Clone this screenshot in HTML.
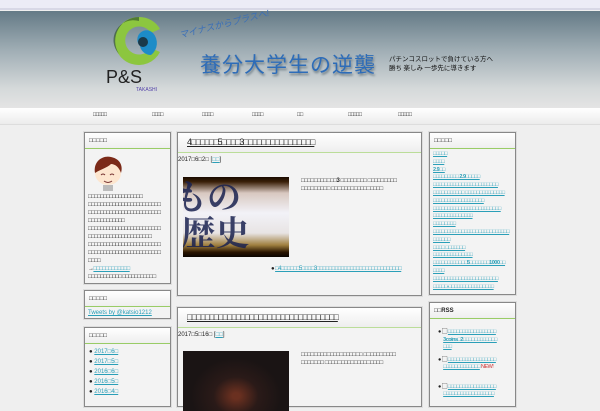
<!DOCTYPE html>
<html><head><meta charset="utf-8"><style>
*{margin:0;padding:0;box-sizing:border-box}
body{width:600px;height:400px;overflow:hidden;background:#efefef;font-family:"Liberation Sans","Noto Sans CJK JP",sans-serif;font-size:7px;color:#333;position:relative}
.abs{position:absolute}
#top{left:0;top:0;width:600px;height:10px;background:#ececf6;border-bottom:2px solid #d8d8e6}
#hdr{left:0;top:11px;width:600px;height:97px;background:linear-gradient(#647a86,#9fadb4 40%,#d5d9da 80%,#e4e4e4)}
#nav{left:0;top:108px;width:600px;height:17px;background:linear-gradient(#fff,#ececec);border-bottom:1px solid #ddd}
.ni{position:absolute;top:112px;font-size:6px;color:#222;letter-spacing:-1px;font-weight:bold}
.box{position:absolute;background:#f3f3f3;border:1px solid #888;box-shadow:0 0 0 1px #ddd}
.bh{height:16px;background:linear-gradient(#fff,#eee);border-bottom:1px solid #9c6;font-size:6px;padding:5px 4px;color:#222;font-weight:bold}
.t{font-size:6px;line-height:8px;color:#222;font-weight:bold}
a,.lk{color:#2a9fb8;text-decoration:underline}
</style></head><body>
<div id="top" class="abs"></div>
<div id="hdr" class="abs"></div>
<svg class="abs" style="left:112px;top:14px" width="56" height="54" viewBox="0 0 56 54">
<path d="M27 3a24 24 0 1 0 21 35l-9-4a14 14 0 1 1 0-15l9-4A24 24 0 0 0 27 3z" fill="#8cc63f"/>
<path d="M27 3a24 24 0 0 0-20 37a20 20 0 0 1 20-33z" fill="#2a4a2a" opacity=".6"/>
<path d="M41 19a15 15 0 0 1-2 22a11 11 0 0 1-11-9a9 9 0 0 1 13-13z" fill="#1d8cc8"/>
<circle cx="31" cy="28" r="5" fill="#1a3a4a"/>
</svg>
<div class="abs" style="left:106px;top:67px;font-size:18px;color:#222">P&amp;S</div>
<div class="abs" style="left:136px;top:87px;font-size:5px;color:#54a">TAKASHI</div>
<div class="abs" style="left:181px;top:28px;font-size:9px;color:#3a6fb8;transform:rotate(-14deg);transform-origin:left bottom;font-style:italic">マイナスからプラスへ!</div>
<div class="abs" style="left:200px;top:49px;font-size:21px;letter-spacing:1px;color:#2d6cb8;text-shadow:1px 2px 2px #6a7a84;font-family:'Noto Sans CJK JP',sans-serif">養分大学生の逆襲</div>
<div class="abs" style="left:389px;top:54px;font-size:6.5px;line-height:9px;color:#111;font-family:'Noto Sans CJK JP',sans-serif">パチンコスロットで負けている方へ<br>勝ち 楽しみ 一歩先に導きます</div>
<div id="nav" class="abs"></div>
<div class="ni" style="left:93px">□□□□□</div>
<div class="ni" style="left:152px">□□□□</div>
<div class="ni" style="left:202px">□□□□</div>
<div class="ni" style="left:252px">□□□□</div>
<div class="ni" style="left:297px">□□</div>
<div class="ni" style="left:348px">□□□□□</div>
<div class="ni" style="left:398px">□□□□□</div>

<div class="box" style="left:84px;top:132px;width:87px;height:152px">
<div class="bh">□□□□□</div>
<svg style="margin:4px 0 0 4px" width="38" height="38" viewBox="0 0 38 38"><ellipse cx="19" cy="20" rx="13" ry="12" fill="#fde6cf"/><path d="M6 20c-2-12 8-18 16-16c10 2 12 10 10 16c-2-6-6-9-10-9c-4 4-10 5-16 9z" fill="#7b2a18"/><path d="M12 22q2-2 4 0M21 22q2-2 4 0M15 28q4 3 8 0" stroke="#733" fill="none"/><rect x="14" y="32" width="10" height="6" fill="#bbb"/></svg>
<div class="t" style="padding:0 3px;letter-spacing:-0.6px">□□□□□□□□□□□□□□□□□□<br>□□□□□□□□□□□□□□□□□□□□□□□□<br>□□□□□□□□□□□□□□□□□□□□□□□□<br>□□□□□□□□□□□□<br>□□□□□□□□□□□□□□□□□□□□□□□□<br>□□□□□□□□□□□□□□□□□□□□□<br>□□□□□□□□□□□□□□□□□□□□□□□□<br>□□□□□□□□□□□□□□□□□□□□□□□□<br>□□□□<br>→<span class="lk">□□□□□□□□□□□□</span><br>□□□□□□□□□□□ □□□□□□□□□□□</div>
</div>
<div class="box" style="left:84px;top:290px;width:87px;height:29px">
<div class="bh">□□□□□</div>
<div class="t" style="padding:2px 3px;font-weight:normal"><a>Tweets by @katsio1212</a></div>
</div>
<div class="box" style="left:84px;top:327px;width:87px;height:80px">
<div class="bh">□□□□□</div>
<div class="t" style="padding:3px 4px;line-height:10px;font-weight:normal">● <a>2017□6□</a><br>● <a>2017□5□</a><br>● <a>2016□6□</a><br>● <a>2016□5□</a><br>● <a>2016□4□</a></div>
</div>

<div class="box" style="left:177px;top:132px;width:245px;height:164px">
<div style="height:20px;background:linear-gradient(#fff,#eee);border-bottom:1px solid #bd9;padding:4px 0 0 9px;font-size:9px;color:#222;text-decoration:underline;letter-spacing:-1px">4□□□□□□5□□□□3□□□□□□□□□□□□□□□□</div>
<div class="t" style="padding:3px 0 0 0;font-weight:normal">2017□6□2□ [<span class="lk">□□</span>]</div>
<div style="position:absolute;left:5px;top:44px;width:106px;height:80px;overflow:hidden;background:linear-gradient(#1a0a00 0,#3a2008 6%,#d8c8c0 20%,#f2f2f8 45%,#e8e4e4 70%,#a08040 85%,#2a1400 94%,#0a0400)"><div style="font-size:34px;color:#1a2250;font-family:'Noto Serif CJK SC',serif;line-height:36px;padding-left:0;font-weight:bold;opacity:.85;margin-left:-10px">もの<br>&nbsp;歴史</div></div>
<div class="t" style="position:absolute;left:123px;top:44px;width:120px;letter-spacing:-0.4px">□□□□□□□□□□□3 □□□□□□□□ □□□□□□□□□<br>□□□□□□□□□ □□□□□□□□□□□□□□□□</div>
<div class="t" style="position:absolute;left:93px;top:132px;letter-spacing:-0.6px;font-weight:normal">● <span class="lk">□4□□□□□□5□□□□3□□□□□□□□□□□□□□□□□□□□□□□□□□□□</span></div>
</div>
<div class="box" style="left:177px;top:307px;width:245px;height:100px">
<div style="height:20px;background:linear-gradient(#fff,#eee);border-bottom:1px solid #bd9;padding:4px 0 0 9px;font-size:9px;color:#222;text-decoration:underline;letter-spacing:-1px">□□□□□□□□□□□□□□□□□□□□□□□□□□□□□□□□□□</div>
<div class="t" style="padding:3px 0 0 0;font-weight:normal">2017□5□16□ [<span class="lk">□□</span>]</div>
<div style="position:absolute;left:5px;top:43px;width:106px;height:60px;background:radial-gradient(ellipse at 50% 75%,#6a3020 5%,#2a1a18 30%,#1a1414 60%)"></div>
<div class="t" style="position:absolute;left:123px;top:43px;width:120px;letter-spacing:-0.4px">□□□□□□□□□□□□□□□□□□□ □□□□□□□□□□<br>□□□□□□□ □□□□□□□□□□□□□□□□□□</div>
</div>

<div class="box" style="left:429px;top:132px;width:87px;height:163px">
<div class="bh">□□□□□</div>
<div class="t" style="padding:2px 3px;line-height:7.8px;font-size:5.5px;letter-spacing:-0.5px"><a>□□□□□</a><br><a>□□□□</a><br><a>2.9□□</a><br><a>□□□□□□□□□ 2.9□□□□□</a><br><a>□□□□□□□□□□□□□□□□□□□□□□□</a><br><a>□□□□□□□□□□□ □□□□□□□□□□□□□□</a><br><a>□□□□□□□□□□□□□□□□□□</a><br><a>□□□□□□□□□□□□□□□□□□□□□□□□</a><br><a>□□□□□□□□□□□□□□</a><br><a>□□□□□□□□</a><br><a>□□□□□□□□□□□□□□□□□□□□□□□□□□□</a><br><a>□□□□□□</a><br><a>□□□□ □□□□□□□</a><br><a>□□□□□□□□□□□□□□</a><br><a>□□□□□□□□□□□□5□□□□□□□1000□□</a><br><a>□□□□</a><br><a>□□□□□□□□□□□□□□□□□□□□□□□</a><br><a>□□□□□-□□□□□□□□□□□□□□□□</a></div>
</div>
<div class="box" style="left:429px;top:302px;width:87px;height:105px">
<div class="bh">□□RSS</div>
<div class="t" style="padding:10px 3px 0 8px;font-size:5.5px;line-height:7.5px;letter-spacing:-0.5px">
<div style="margin-bottom:5px">● ▢ <a>□□□□□□□□□□□□□□□□□</a><br>&nbsp;&nbsp;&nbsp;&nbsp;&nbsp;<a>3coins□2□□□□□□□□□□□□</a><br>&nbsp;&nbsp;&nbsp;&nbsp;&nbsp;<a>□□□</a></div>
<div style="margin-bottom:12px">● ▢ <a>□□□□□□□□□□□□□□□□□</a><br>&nbsp;&nbsp;&nbsp;&nbsp;&nbsp;<a>□□□□□□□□□□□□□</a> <span style="color:#c33;font-weight:normal">NEW!</span></div>
<div>● ▢ <a>□□□□□□□□□□□□□□□□□</a><br>&nbsp;&nbsp;&nbsp;&nbsp;&nbsp;<a>□□□□□□□□□□□□□□□□□□</a></div>
</div>
</div>
</body></html>
